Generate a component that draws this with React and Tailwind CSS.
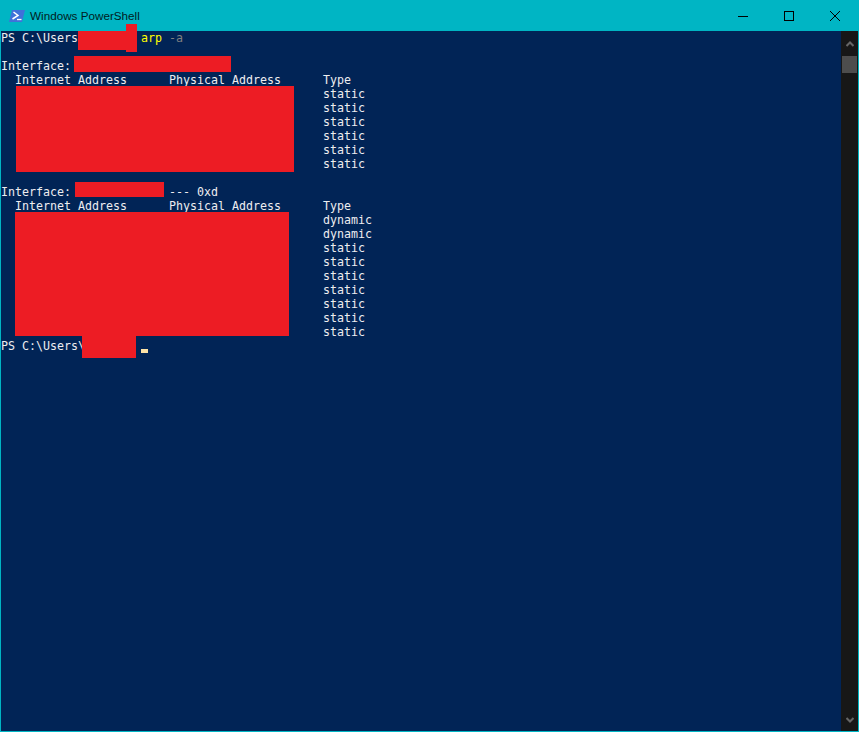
const consoleFont = 'font-["DejaVu_Sans_Mono","Liberation_Mono",monospace]';

const topRows = ['static', 'static', 'static', 'static', 'static', 'static'];
const bottomRows = ['dynamic', 'dynamic', 'static', 'static', 'static', 'static', 'static', 'static', 'static'];

function Row({ children }) {
  return <div className="h-[14px] whitespace-pre leading-[14px]">{children || ' '}</div>;
}

function Redaction({ className }) {
  return <div className={`absolute bg-[#ed1c24] ${className}`} />;
}

function PowerShellIcon() {
  return (
    <svg width="16" height="12" viewBox="0 0 16 12">
      <path d="M3 0 H16 L13 12 H0 Z" fill="#3f72d9" />
      <path d="M4.5 2 L9 5.5 L3.5 9" fill="none" stroke="#ffffff" strokeWidth="1.5" />
      <path d="M8 9.5 H12.5" stroke="#ffffff" strokeWidth="1.3" />
    </svg>
  );
}

function TitleBar() {
  return (
    <div className="flex h-[31px] shrink-0 items-center bg-[#00b5c4]">
      <div className="ml-[9px] flex w-[21px] items-center">
        <PowerShellIcon />
      </div>
      <span className="font-['Liberation_Sans',sans-serif] text-[11.7px] text-[#001c22]">Windows PowerShell</span>
      <div className="ml-auto mr-px flex">
        <div className="flex h-[30px] w-[46px] items-center justify-center">
          <svg width="10" height="10" viewBox="0 0 10 10"><path d="M0 5.5 H10" stroke="#000" strokeWidth="1" /></svg>
        </div>
        <div className="flex h-[30px] w-[46px] items-center justify-center">
          <svg width="10" height="10" viewBox="0 0 10 10"><rect x="0.5" y="0.5" width="9" height="9" fill="none" stroke="#000" strokeWidth="1" /></svg>
        </div>
        <div className="flex h-[30px] w-[46px] items-center justify-center">
          <svg width="10" height="10" viewBox="0 0 10 10"><path d="M0 0 L10 10 M10 0 L0 10" stroke="#000" strokeWidth="1" /></svg>
        </div>
      </div>
    </div>
  );
}

function Scrollbar() {
  return (
    <div className="flex w-[17px] shrink-0 flex-col bg-[#171717]">
      <div className="flex h-[25px] items-center justify-center">
        <svg width="8" height="6" viewBox="0 0 8 6"><path d="M0.5 5 L4 1.5 L7.5 5" fill="none" stroke="#666" strokeWidth="2" /></svg>
      </div>
      <div className="mx-[1px] h-[17px] bg-[#4d4d4d]" />
      <div className="mt-auto flex h-[17px] items-start justify-center pt-[3px]">
        <svg width="8" height="6" viewBox="0 0 8 6"><path d="M0.5 1 L4 4.5 L7.5 1" fill="none" stroke="#666" strokeWidth="2" /></svg>
      </div>
    </div>
  );
}

export default function App() {
  return (
    <div className="flex h-[732px] w-[859px] flex-col overflow-hidden border-x border-b border-[#00b5c4] bg-[#012456]">
      <div className="-mx-px">
        <TitleBar />
      </div>
      <div className="flex min-h-0 flex-1">
        <div className={`relative min-w-0 flex-1 text-[11.63px] text-[#eeedf0] ${consoleFont}`}>
          <Row>
            {'PS C:\\Users         '}
            <span className="text-[#ffff00]">arp</span>
            <span className="text-[#808080]"> -a</span>
          </Row>
          <Row />
          <Row>Interface:</Row>
          <Row>{'  Internet Address      Physical Address      Type'}</Row>
          {topRows.map((t, i) => (
            <Row key={i}>{' '.repeat(46) + t}</Row>
          ))}
          <Row />
          <Row>{'Interface:              --- 0xd'}</Row>
          <Row>{'  Internet Address      Physical Address      Type'}</Row>
          {bottomRows.map((t, i) => (
            <Row key={i}>{' '.repeat(46) + t}</Row>
          ))}
          <Row>PS C:\Users\</Row>

          <div className="absolute left-[140px] top-[318px] h-[4px] w-[7px] bg-[#fde3a7]" />

          <Redaction className="left-[77px] top-[0px] h-[19px] w-[59px]" />
          <Redaction className="left-[125px] top-[-7px] h-[28px] w-[11px]" />
          <Redaction className="left-[73px] top-[25px] h-[16px] w-[157px]" />
          <Redaction className="left-[15px] top-[55px] h-[86px] w-[278px]" />
          <Redaction className="left-[74px] top-[151px] h-[15px] w-[89px]" />
          <Redaction className="left-[14px] top-[181px] h-[124px] w-[274px]" />
          <Redaction className="left-[81px] top-[305px] h-[22px] w-[54px]" />
        </div>
        <Scrollbar />
      </div>
    </div>
  );
}
